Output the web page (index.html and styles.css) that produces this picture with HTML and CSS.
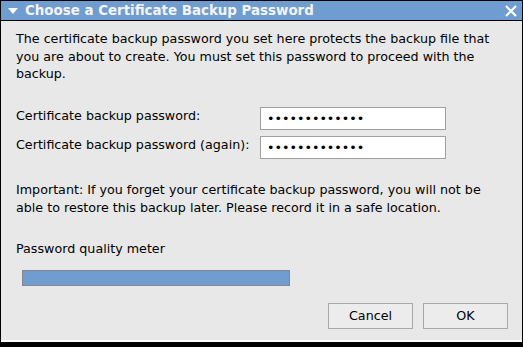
FILE: index.html
```html
<!DOCTYPE html>
<html lang="en">
<head>
  <meta charset="UTF-8">
  <title>Choose a Certificate Backup Password</title>
  <link rel="stylesheet" href="styles.css">
</head>
<body>

  <div class="window">
    <div class="titlebar">
      <svg class="menu-arrow" width="10" height="6" viewBox="0 0 10 6"><polygon points="0,0 10,0 5,6" fill="#fff"/></svg>
      <span class="title">Choose a Certificate Backup Password</span>
      <svg class="close" width="12" height="12" viewBox="0 0 12 12"><path d="M1 1 L11 11 M11 1 L1 11" stroke="#fff" stroke-width="2.2"/></svg>
    </div>

    <div class="content">
      <p class="intro">The certificate backup password you set here protects the backup file that you are about to create. You must set this password to proceed with the backup.</p>

      <div class="fields">
        <label for="pw1">Certificate backup password:</label>
        <input type="password" id="pw1" value="aaaaaaaaaaaaa">
        <label for="pw2">Certificate backup password (again):</label>
        <input type="password" id="pw2" value="aaaaaaaaaaaaa">
      </div>

      <p class="warning">Important: If you forget your certificate backup password, you will not be able to restore this backup later. Please record it in a safe location.</p>

      <div class="meter-label">Password quality meter</div>
      <div class="meter"><div class="meter-fill" style="width: 100%"></div></div>

      <div class="buttons">
        <button type="button">Cancel</button>
        <button type="button">OK</button>
      </div>
    </div>
  </div>

</body>
</html>
```

FILE: styles.css
```css
* {
  box-sizing: border-box;
  font-family: "DejaVu Sans", sans-serif;
}

body {
  margin: 0;
  background: #000;
  width: 523px;
  height: 347px;
  overflow: hidden;
}

.window {
  margin: 0 1px;
  height: 342px;
  background: #e8e8e8;
  border-bottom: 2px solid #fff;
}

.titlebar {
  height: 21px;
  background: #6f9dcf;
  border-top: 1px solid #000;
  border-bottom: 1px solid #000;
  display: flex;
  align-items: center;
  padding: 0 5px 0 7px;
  color: #f4f4f4;
}

.menu-arrow {
  margin-right: 7px;
}

.title {
  font-weight: bold;
  font-size: 13.4px;
  flex: 1;
}

.content {
  padding: 9px 15px 0 15px;
  font-size: 12.7px;
  color: #000;
}

.intro {
  margin: 0;
  line-height: 17.5px;
  width: 490px;
}

.fields {
  display: grid;
  grid-template-columns: 244px 186px;
  row-gap: 6px;
  align-items: start;
  margin-top: 24px;
}

label {
  padding-top: 1px;
}

input {
  height: 23px;
  border: 1px solid #a0a0a0;
  background: #fff;
  padding: 0 6px;
  font-size: 12.7px;
}

.warning {
  margin: 22px 0 0 0;
  line-height: 18px;
}

.meter-label {
  margin-top: 24px;
}

.meter {
  margin: 14px 0 0 6px;
  width: 268px;
  height: 16px;
  border: 1px solid #888;
  background: #e8e8e8;
}

.meter-fill {
  height: 100%;
  background: #6f9dcf;
}

.buttons {
  display: flex;
  justify-content: flex-end;
  gap: 10px;
  margin: 17px -1px 0 0;
}

button {
  width: 85px;
  height: 26px;
  border: 1px solid #a8a8a8;
  background: #ececec;
  font-size: 12.7px;
  color: #000;
}
```
